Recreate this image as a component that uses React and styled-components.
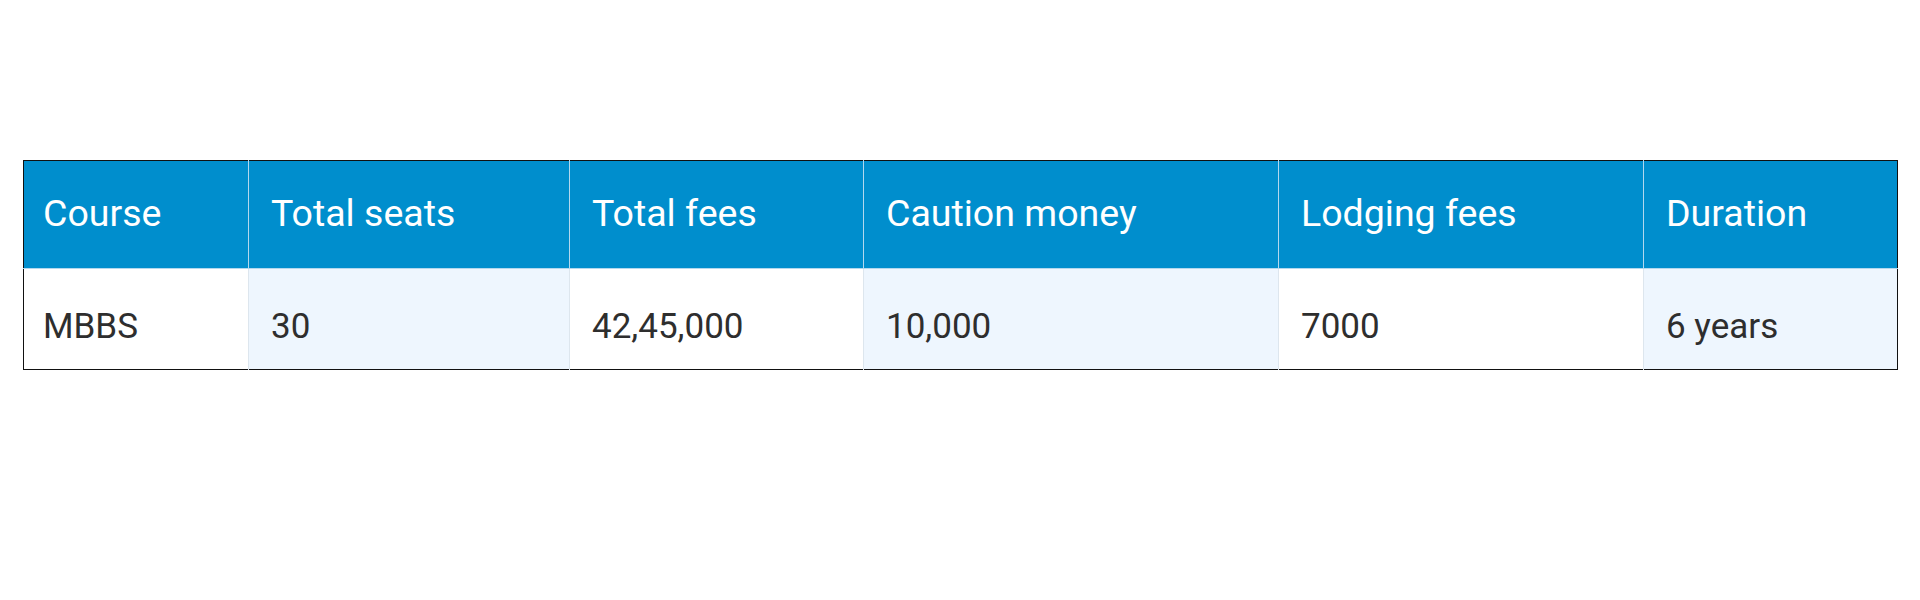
import styled, { createGlobalStyle } from "styled-components";

const GlobalStyle = createGlobalStyle`
  body {
    margin: 0;
    background: #ffffff;
    font-family: Roboto, "Liberation Sans", sans-serif;
  }
`;

const COLUMNS = [
  { key: "course", label: "Course", width: 225 },
  { key: "seats", label: "Total seats", width: 321 },
  { key: "fees", label: "Total fees", width: 294 },
  { key: "caution", label: "Caution money", width: 415 },
  { key: "lodging", label: "Lodging fees", width: 365 },
  { key: "duration", label: "Duration", width: 254 },
];

const ROWS = [
  {
    course: "MBBS",
    seats: "30",
    fees: "42,45,000",
    caution: "10,000",
    lodging: "7000",
    duration: "6 years",
  },
];

const Page = styled.div`
  padding: 160px 23px 0;
`;

const FeeTable = styled.table`
  width: 100%;
  border-collapse: collapse;
  table-layout: fixed;
  border: 1px solid #111;
`;

const HeadCell = styled.th`
  height: 104px;
  padding: 0 18px 3px 22px;
  background: #008ecd;
  color: #ffffff;
  font-size: 37.5px;
  font-weight: 400;
  text-align: left;
  border-left: 1px solid #b3d8ee;
  border-bottom: 1px solid #b3d8ee;

  &:first-child {
    padding-left: 19px;
    border-left: none;
  }
`;

const Cell = styled.td`
  height: 86px;
  padding: 14px 18px 0 22px;
  font-size: 35px;
  color: #2e2e2e;
  background: ${({ $shaded }) => ($shaded ? "#eef6fe" : "#ffffff")};
  border-left: 1px solid #dde6ee;

  &:first-child {
    padding-left: 19px;
    border-left: none;
  }
`;

export default function App() {
  return (
    <Page>
      <GlobalStyle />
      <FeeTable>
        <colgroup>
          {COLUMNS.map((c) => (
            <col key={c.key} style={{ width: c.width }} />
          ))}
        </colgroup>
        <thead>
          <tr>
            {COLUMNS.map((c) => (
              <HeadCell key={c.key}>{c.label}</HeadCell>
            ))}
          </tr>
        </thead>
        <tbody>
          {ROWS.map((row, i) => (
            <tr key={i}>
              {COLUMNS.map((c, j) => (
                <Cell key={c.key} $shaded={j % 2 === 1}>
                  {row[c.key]}
                </Cell>
              ))}
            </tr>
          ))}
        </tbody>
      </FeeTable>
    </Page>
  );
}
